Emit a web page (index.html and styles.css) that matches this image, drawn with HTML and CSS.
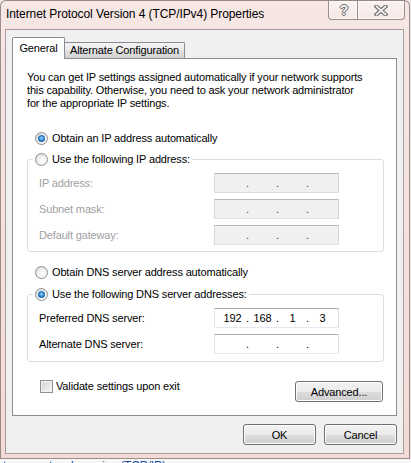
FILE: index.html
```html
<!DOCTYPE html>
<html lang="en">
<head>
  <meta charset="UTF-8">
  <title>Internet Protocol Version 4 (TCP/IPv4) Properties</title>
  <link rel="stylesheet" href="styles.css">
</head>
<body>
  <div class="window">
    <div class="titlebar">
      <div class="title">Internet Protocol Version 4 (TCP/IPv4) Properties</div>
      <div class="caption-buttons">
        <div class="cap-btn cap-help"><span class="help-glyph">?</span></div>
        <div class="cap-btn cap-close">
          <svg width="14" height="11" viewBox="0 0 14 11">
            <path d="M2.5 1.5 L11.5 9.5 M11.5 1.5 L2.5 9.5" stroke="#6b6b6b" stroke-width="4" stroke-linecap="square" fill="none"/>
            <path d="M2.5 1.5 L11.5 9.5 M11.5 1.5 L2.5 9.5" stroke="#f4f4f4" stroke-width="1.8" stroke-linecap="square" fill="none"/>
          </svg>
        </div>
      </div>
    </div>
    <div class="client">
      <div class="tabs">
        <div class="tab active">General</div>
        <div class="tab">Alternate Configuration</div>
      </div>
      <div class="panel">
        <p class="intro">You can get IP settings assigned automatically if your network supports<br>this capability. Otherwise, you need to ask your network administrator<br>for the appropriate IP settings.</p>

        <label class="option option-first"><span class="radio checked"></span>Obtain an IP address automatically</label>

        <fieldset class="group disabled">
          <legend><label class="option"><span class="radio"></span>Use the following IP address:</label></legend>
          <div class="fields">
            <span class="field-label">IP address:</span>
            <div class="ip-box"><span class="seg"></span><span class="dot">.</span><span class="seg"></span><span class="dot">.</span><span class="seg"></span><span class="dot">.</span><span class="seg"></span></div>
            <span class="field-label">Subnet mask:</span>
            <div class="ip-box"><span class="seg"></span><span class="dot">.</span><span class="seg"></span><span class="dot">.</span><span class="seg"></span><span class="dot">.</span><span class="seg"></span></div>
            <span class="field-label">Default gateway:</span>
            <div class="ip-box"><span class="seg"></span><span class="dot">.</span><span class="seg"></span><span class="dot">.</span><span class="seg"></span><span class="dot">.</span><span class="seg"></span></div>
          </div>
        </fieldset>

        <label class="option option-dns"><span class="radio"></span>Obtain DNS server address automatically</label>

        <fieldset class="group group-dns">
          <legend><label class="option"><span class="radio checked"></span>Use the following DNS server addresses:</label></legend>
          <div class="fields">
            <span class="field-label">Preferred DNS server:</span>
            <div class="ip-box"><span class="seg">192</span><span class="dot">.</span><span class="seg">168</span><span class="dot">.</span><span class="seg">1</span><span class="dot">.</span><span class="seg">3</span></div>
            <span class="field-label">Alternate DNS server:</span>
            <div class="ip-box"><span class="seg"></span><span class="dot">.</span><span class="seg"></span><span class="dot">.</span><span class="seg"></span><span class="dot">.</span><span class="seg"></span></div>
          </div>
        </fieldset>

        <div class="panel-footer">
          <label class="check"><span class="checkbox"></span>Validate settings upon exit</label>
          <button class="btn btn-advanced">Advanced...</button>
        </div>
      </div>
      <div class="dialog-buttons">
        <button class="btn">OK</button>
        <button class="btn">Cancel</button>
      </div>
    </div>
  </div>
  <div class="behind">ter on network service (TCP/IP)</div>
</body>
</html>
```
FILE: styles.css
```css
body {
  margin: 0;
  width: 411px;
  height: 463px;
  overflow: hidden;
  background: #ebe8e8;
  font-family: "Liberation Sans", Arial, sans-serif;
  font-size: 11px;
  letter-spacing: -0.15px;
  color: #000;
}
.window {
  box-sizing: border-box;
  width: 410px;
  height: 459px;
  display: flex;
  flex-direction: column;
  padding: 0 5px 4px 4px;
  border: 1px solid rgba(70, 50, 50, 0.5);
  border-radius: 6px 6px 0 0;
  background: linear-gradient(#f6e7e4, #f2dbd7);
}
.titlebar {
  display: flex;
  justify-content: space-between;
  flex-shrink: 0;
  height: 28px;
  margin: 0 -5px 0 -4px;
  padding-left: 5px;
}
.title {
  font-size: 12px;
  line-height: 13px;
  padding-top: 7px;
  letter-spacing: -0.08px;
}
.caption-buttons {
  display: flex;
  align-self: flex-start;
  margin-right: 4px;
}
.cap-btn {
  box-sizing: border-box;
  height: 19px;
  display: flex;
  align-items: center;
  justify-content: center;
  border: 1px solid rgba(60, 40, 40, 0.5);
  border-top: 0;
  box-shadow: inset 0 0 0 1px rgba(255, 255, 255, 0.55);
  background: linear-gradient(rgba(255, 255, 255, 0.5), rgba(255, 255, 255, 0.12));
}
.cap-help {
  width: 30px;
  padding-left: 2px;
  border-radius: 0 0 0 4px;
}
.cap-close {
  width: 47px;
  border-left: 0;
  border-radius: 0 0 4px 0;
}
.help-glyph {
  font-size: 14px;
  font-weight: bold;
  line-height: 14px;
  color: #f2f2f2;
  text-shadow: 1px 0 #6b6b6b, -1px 0 #6b6b6b, 0 1px #6b6b6b, 0 -1px #6b6b6b;
}
.cap-close svg {
  display: block;
}
.client {
  flex: 1;
  display: flex;
  flex-direction: column;
  border: 1px solid #a89d9c;
  background: #f0f0f0;
  padding: 7px 6px 0;
}
.tabs {
  display: flex;
  align-items: flex-end;
  height: 21px;
}
.tab {
  box-sizing: border-box;
  width: 120px;
  height: 16px;
  border: 1px solid #898c95;
  border-bottom: 0;
  border-left: 0;
  border-radius: 0 2px 0 0;
  text-align: center;
  line-height: 15px;
  background: linear-gradient(#f3f3f3, #ebebeb 45%, #dedede 55%, #d2d2d2);
}
.tab.active {
  width: 53px;
  height: 22px;
  margin-bottom: -1px;
  border-left: 1px solid #898c95;
  border-radius: 2px 2px 0 0;
  line-height: 20px;
  background: #fff;
  position: relative;
  z-index: 1;
}
.panel {
  box-sizing: border-box;
  height: 358px;
  border: 1px solid #898c95;
  background: #fff;
}
.intro {
  margin: 12px 0 0 14px;
  line-height: 13px;
}
.option {
  display: flex;
  align-items: center;
  height: 13px;
  line-height: 13px;
}
.panel > .option {
  margin-left: 22px;
}
.option-first {
  margin-top: 22px;
}
.option-dns {
  margin-top: 14px;
}
.radio {
  box-sizing: border-box;
  flex-shrink: 0;
  width: 13px;
  height: 13px;
  margin-right: 4px;
  border-radius: 50%;
  border: 1px solid #8c8f94;
  background: radial-gradient(circle at 60% 65%, #ffffff 0, #f1f1f1 45%, #d0d0d0 100%);
  display: grid;
  place-items: center;
}
.radio.checked::after {
  content: "";
  width: 7px;
  height: 7px;
  border-radius: 50%;
  background: radial-gradient(circle at 50% 45%, #a6dcfc 0, #3b8bd3 40%, #0f4d8f 85%);
}
.group {
  margin: 8px 12px 0 14px;
  padding: 7px 11px 6px;
  min-width: 0;
  border: 1px solid #d5dfe5;
  border-radius: 3px;
}
.group-dns {
  margin-top: 9px;
  padding-bottom: 7px;
}
.group legend {
  padding: 0 2px;
  margin-left: -6px;
}
.fields {
  display: grid;
  grid-template-columns: 175px 125px;
  row-gap: 6px;
  align-items: center;
}
.field-label {
  line-height: 13px;
}
.disabled .field-label {
  color: #a0a0a0;
}
.ip-box {
  box-sizing: border-box;
  width: 125px;
  height: 20px;
  display: flex;
  padding: 0 2px 0 4px;
  border: 1px solid;
  border-color: #abadb3 #dbdfe6 #e3e9ef #e2e3ea;
  background: #fff;
  line-height: 18px;
}
.disabled .ip-box {
  background: #f0f0f0;
  border-color: #b9b9b9 #d7d7d7 #dedede #d7d7d7;
}
.disabled .dot {
  color: #444;
}
.seg {
  width: 27px;
  text-align: center;
}
.dot {
  width: 3px;
  text-align: center;
}
.panel-footer {
  display: flex;
  justify-content: space-between;
  align-items: flex-start;
  margin: 19px 13px 0 27px;
}
.check {
  display: flex;
  align-items: center;
  height: 13px;
  line-height: 13px;
  margin-top: -1px;
}
.checkbox {
  box-sizing: border-box;
  width: 13px;
  height: 13px;
  margin-right: 3px;
  border: 1px solid #8f8f8f;
  background: linear-gradient(135deg, #d2d2d2, #f7f7f7);
  box-shadow: inset 0 0 0 1px #f3f3f3;
}
.btn {
  box-sizing: border-box;
  height: 21px;
  padding: 0;
  font: inherit;
  letter-spacing: inherit;
  color: #000;
  border: 1px solid #707070;
  border-radius: 3px;
  background: linear-gradient(#f2f2f2 0, #ebebeb 50%, #dddddd 51%, #cfcfcf 100%);
  box-shadow: inset 0 0 0 1px #fcfcfc;
}
.btn-advanced {
  width: 88px;
}
.dialog-buttons {
  display: flex;
  justify-content: flex-end;
  gap: 8px;
  margin-top: 8px;
}
.dialog-buttons .btn {
  width: 73px;
}
.behind {
  height: 4px;
  overflow: hidden;
  padding-left: 3px;
  background: #f7f7f7;
  color: #1c4f9c;
  font-size: 12px;
  line-height: 14px;
}
```
